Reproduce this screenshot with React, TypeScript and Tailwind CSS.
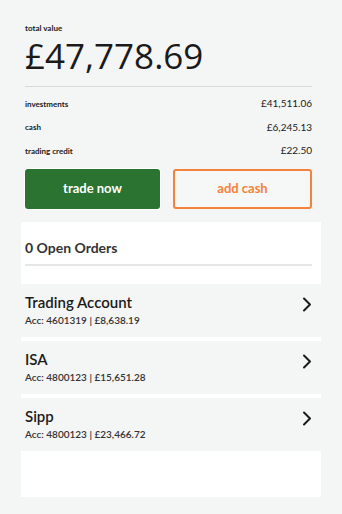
import React from "react"

const BREAKDOWN = [
  { label: "investments", value: "£41,511.06" },
  { label: "cash", value: "£6,245.13" },
  { label: "trading credit", value: "£22.50" },
]

const ACCOUNTS = [
  { name: "Trading Account", acc: "4601319", value: "£8,638.19" },
  { name: "ISA", acc: "4800123", value: "£15,651.28" },
  { name: "Sipp", acc: "4800123", value: "£23,466.72" },
]

function Chevron() {
  return (
    <svg width="10" height="15" viewBox="0 0 10 15" fill="none">
      <path d="M2 1.5 L8 7.5 L2 13.5" stroke="#1a1a1a" strokeWidth="2" strokeLinecap="round" strokeLinejoin="round" />
    </svg>
  )
}

export default function App() {
  return (
    <div className="min-h-[514px] w-[342px] bg-[#f4f5f5] pt-[22px] font-['Lato','Open_Sans',sans-serif] text-[#1a1a1a]">
      <div className="ml-[25px] w-[287px]">
        <p className="text-[8px] font-bold leading-[12px]">total value</p>
        <p className="mt-[2px] font-['Open_Sans',sans-serif] text-[35px] leading-[40px]">£47,778.69</p>
        <div className="mt-[10px] h-px bg-[#d9dbdb]" />
        <div className="mt-[5px] flex flex-col">
          {BREAKDOWN.map((r) => (
            <div key={r.label} className="flex h-[23.5px] items-center justify-between">
              <span className="text-[8px] font-bold">{r.label}</span>
              <span className="text-[10px]">{r.value}</span>
            </div>
          ))}
        </div>
        <div className="mt-[6px] flex gap-[13px]">
          <button className="flex h-[40px] flex-1 items-center justify-center rounded-[3px] bg-[#2a7331] text-[13px] font-bold text-white ring-1 ring-white">
            trade now
          </button>
          <button className="flex h-[40px] flex-1 items-center justify-center rounded-[3px] border-2 border-[#f5823a] bg-[#f6f7f7] text-[13px] font-bold text-[#f5823a]">
            add cash
          </button>
        </div>
      </div>

      <div className="ml-[21px] mt-[13px] w-[300px] bg-white pb-[46px]">
        <div className="pl-[4px] pr-[9px] pt-[16px]">
          <p className="text-[14px] font-bold leading-[20px] text-[#333]">0 Open Orders</p>
          <div className="mt-[6px] h-[2px] bg-[#e6e6e6]" />
        </div>
        <div className="mt-[18px] flex flex-col gap-[4px]">
          {ACCOUNTS.map((a) => (
            <div key={a.name} className="flex h-[53px] items-start justify-between bg-[#f4f5f5] pl-[4px] pr-[9px]">
              <div className="pt-[8px]">
                <p className="text-[15px] font-semibold leading-[20px]">{a.name}</p>
                <p className="mt-[1px] text-[10px] font-semibold leading-[14px] text-[#333]">
                  Acc: {a.acc} | {a.value}
                </p>
              </div>
              <div className="pt-[13px]">
                <Chevron />
              </div>
            </div>
          ))}
        </div>
      </div>
    </div>
  )
}
